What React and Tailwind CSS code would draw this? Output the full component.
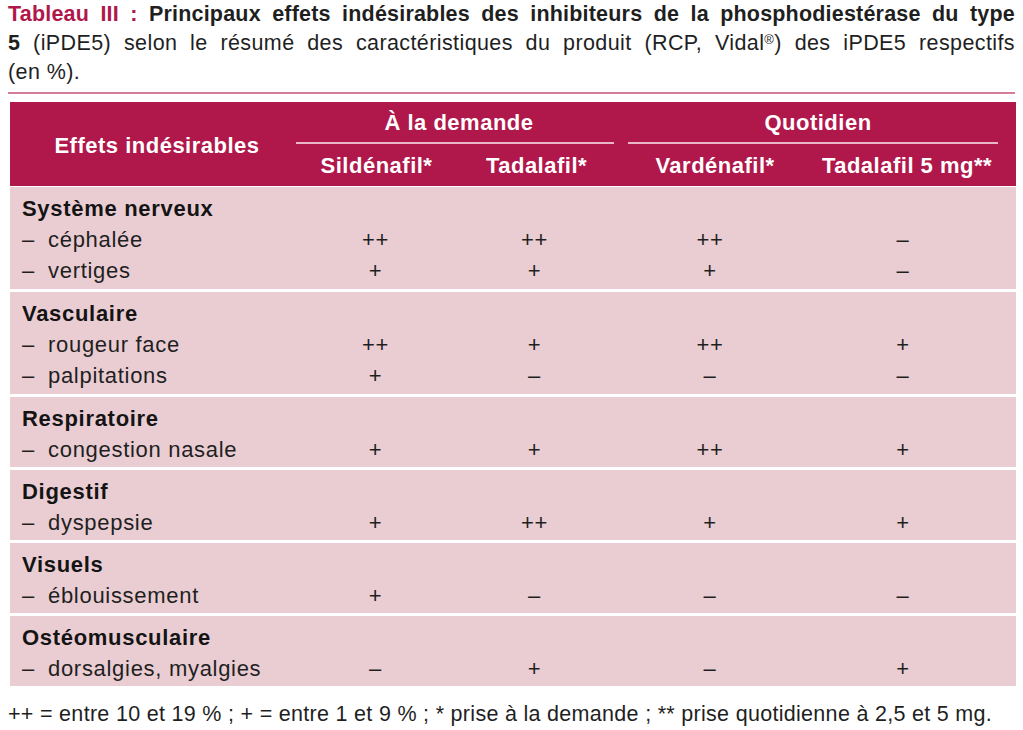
import React from 'react';

const groups = [
  {
    title: 'Système nerveux',
    rows: [
      ['céphalée', '++', '++', '++', '–'],
      ['vertiges', '+', '+', '+', '–'],
    ],
  },
  {
    title: 'Vasculaire',
    rows: [
      ['rougeur face', '++', '+', '++', '+'],
      ['palpitations', '+', '–', '–', '–'],
    ],
  },
  {
    title: 'Respiratoire',
    rows: [['congestion nasale', '+', '+', '++', '+']],
  },
  {
    title: 'Digestif',
    rows: [['dyspepsie', '+', '++', '+', '+']],
  },
  {
    title: 'Visuels',
    rows: [['éblouissement', '+', '–', '–', '–']],
  },
  {
    title: 'Ostéomusculaire',
    rows: [['dorsalgies, myalgies', '–', '+', '–', '+']],
  },
];

const cols = 'grid grid-cols-[286px_159px_159px_14px_190px_190px]';

const App = () => {
  return (
    <div className="w-[1023px] h-[730px] bg-white text-[#1f1f1f] font-['Liberation_Sans',Arial,sans-serif]">
      {/* Caption, laid out line by line like the printed table title */}
      <div className="mx-2 text-[21.5px] leading-[29px] tracking-[0.2px] text-justify">
        <p className="[text-align-last:justify] font-bold">
          <span className="text-[#b0174a]">Tableau III : </span>
          Principaux effets indésirables des inhibiteurs de la phosphodiestérase du type
        </p>
        <p className="[text-align-last:justify] tracking-[0.4px]">
          <span className="font-bold">5</span> (iPDE5) selon le résumé des caractéristiques du produit (RCP, Vidal
          <sup className="text-[13px]">®</sup>) des iPDE5 respectifs
        </p>
        <p className="tracking-[0.4px]">(en %).</p>
      </div>

      <div className="mt-[5px] mx-2 h-[2px] bg-[#d77c98]" />

      {/* Table */}
      <div className="mt-[8px] ml-[10px] mr-[7px]">
        <div className={`${cols} bg-[#b0174a] text-white font-bold text-[22px] tracking-[0.5px] h-[84px]`}>
          <div className="row-span-2 flex items-center justify-center pt-[2px] pl-[8px]">Effets indésirables</div>
          <div className="col-span-2 flex flex-col items-center justify-end">
            <span className="leading-[24px] mb-[7px] pl-[8px]">À la demande</span>
            <div className="w-full h-[2px] bg-[#eab6c6]" />
          </div>
          <div />
          <div className="col-span-2 flex flex-col items-center justify-end pr-[10px]">
            <span className="leading-[24px] mb-[7px] pl-[10px]">Quotidien</span>
            <div className="w-full h-[2px] bg-[#eab6c6]" />
          </div>
          <div className="flex items-center justify-center pl-[2px]">Sildénafil*</div>
          <div className="flex items-center justify-center pl-[4px]">Tadalafil*</div>
          <div />
          <div className="flex items-center justify-center pr-[16px]">Vardénafil*</div>
          <div className="flex items-center justify-center pr-[12px]">Tadalafil 5 mg**</div>
        </div>

        <div className="flex flex-col gap-[3px] pt-[1px] text-[22px] tracking-[0.7px]">
          {groups.map((g) => (
            <div
              key={g.title}
              className={`bg-[#eacdd3] pt-[6px] ${g.rows.length === 1 ? 'pb-[2px]' : 'pb-[3px]'}`}
            >
              <div className="pl-[12px] font-bold leading-[31px] text-[#141414]">{g.title}</div>
              {g.rows.map((r) => (
                <div key={r[0]} className={`${cols} leading-[31px]`}>
                  <div className="pl-[12px]">
                    <span className="inline-block w-[26px]">–</span>
                    {r[0]}
                  </div>
                  <div className="text-center">{r[1]}</div>
                  <div className="text-center">{r[2]}</div>
                  <div />
                  <div className="text-center pr-[26px]">{r[3]}</div>
                  <div className="text-center pr-[20px]">{r[4]}</div>
                </div>
              ))}
            </div>
          ))}
        </div>
      </div>

      {/* Footnote */}
      <p className="mt-[16px] ml-[8px] text-[21.5px] leading-[24px] tracking-[0.3px]">
        ++ = entre 10 et 19 % ; + = entre 1 et 9 % ; * prise à la demande ; ** prise quotidienne à 2,5 et 5 mg.
      </p>
    </div>
  );
};

export default App;
